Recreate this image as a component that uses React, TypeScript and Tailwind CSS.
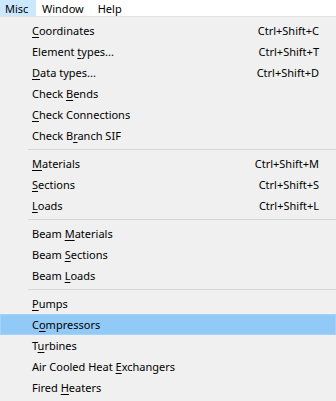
import type { ReactNode } from "react"

type Item = { label: ReactNode; shortcut?: string; active?: boolean }

function k(before: string, key: string, after: string) {
  return (
    <>
      {before}
      <u className="underline-offset-2">{key}</u>
      {after}
    </>
  )
}

const groups: Item[][] = [
  [
    { label: k("", "C", "oordinates"), shortcut: "Ctrl+Shift+C" },
    { label: k("Element ", "t", "ypes..."), shortcut: "Ctrl+Shift+T" },
    { label: k("", "D", "ata types..."), shortcut: "Ctrl+Shift+D" },
    { label: k("Check ", "B", "ends") },
    { label: k("", "C", "heck Connections") },
    { label: k("Check B", "r", "anch SIF") },
  ],
  [
    { label: k("", "M", "aterials"), shortcut: "Ctrl+Shift+M" },
    { label: k("", "S", "ections"), shortcut: "Ctrl+Shift+S" },
    { label: k("", "L", "oads"), shortcut: "Ctrl+Shift+L" },
  ],
  [
    { label: k("Beam ", "M", "aterials") },
    { label: k("Beam ", "S", "ections") },
    { label: k("Beam ", "L", "oads") },
  ],
  [
    { label: k("", "P", "umps") },
    { label: k("C", "o", "mpressors"), active: true },
    { label: k("T", "u", "rbines") },
    { label: k("Air Cooled Heat ", "E", "xchangers") },
    { label: k("Fired ", "H", "eaters") },
  ],
]

function Row({ item }: { item: Item }) {
  return (
    <div
      className={
        "flex h-[21px] items-center justify-between pl-[32px] pr-[17px] " +
        (item.active ? "bg-[#91c9f7] shadow-[inset_0_0_0_1px_#a6d2f7]" : "")
      }
    >
      <span>{item.label}</span>
      {item.shortcut && <span>{item.shortcut}</span>}
    </div>
  )
}

export default function App() {
  return (
    <div
      className="h-[401px] w-[336px] overflow-hidden bg-[#f0f0f0] text-[11px] leading-none text-black"
      style={{ fontFamily: '"Noto Sans", "Open Sans", sans-serif' }}
    >
      <div className="flex h-[17px] items-stretch border-b border-[#e3e3e3] bg-white">
        <div className="flex w-[36px] items-center bg-[#cce8ff] pl-[5px]">Misc</div>
        <div className="flex items-center pl-[6px] pr-[7px]">Window</div>
        <div className="flex items-center px-[7px]">Help</div>
      </div>
      <div className="pt-[3px]">
        {groups.map((g, gi) => (
          <div key={gi}>
            {gi > 0 && (
              <div className="flex h-[7px] items-center pl-[28px]">
                <div className="h-px w-full bg-[#d7d7d7]" />
              </div>
            )}
            {g.map((item, i) => (
              <Row key={i} item={item} />
            ))}
          </div>
        ))}
      </div>
    </div>
  )
}
